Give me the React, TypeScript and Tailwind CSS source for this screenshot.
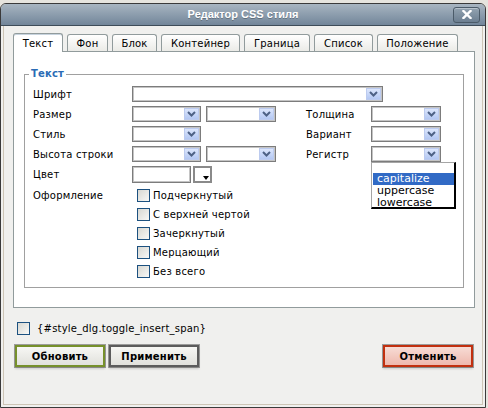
import React from 'react';

const Arrow = () => (
  <div className="w-[15px] h-full flex items-center justify-center bg-linear-to-b from-[#dce6fc] to-[#b4c8f3] border border-[#bccbef]">
    <svg width="9" height="6" viewBox="0 0 9 6">
      <path d="M1 1l3.5 3.5L8 1" fill="none" stroke="#4d6185" strokeWidth="2" />
    </svg>
  </div>
);

const Select = ({ w, children }: { w: string; children?: React.ReactNode }) => (
  <div className={`${w} relative h-[16px] flex justify-end border border-[#7c7c7c] bg-white p-px shadow-[inset_0_0_0_1px_#c4c4c4]`}>
    <Arrow />
    {children}
  </div>
);

const Check = () => (
  <div className="w-[13px] h-[13px] shrink-0 border border-[#1c5180] bg-linear-to-br from-[#d8d8d2] to-[#f8f8f6]" />
);

const Tab = ({ label, w, active }: { label: string; w: string; active?: boolean }) => (
  <div
    className={
      active
        ? `${w} h-[19px] -mb-px relative z-10 flex items-center justify-center bg-white border border-b-0 border-[#919b9c] rounded-t-[3px] shadow-[inset_0_1px_0_#c7d3de]`
        : `${w} h-[17px] flex items-center justify-center bg-linear-to-b from-[#ffffff] to-[#ebebe7] border border-b-0 border-[#919b9c] rounded-t-[3px]`
    }
  >
    {label}
  </div>
);

const Btn = ({ label, tone }: { label: string; tone: 'green' | 'grey' | 'red' }) => {
  const cls =
    tone === 'green'
      ? 'border-[#76902b] from-[#f7f7f4] to-[#e1e1dc]'
      : tone === 'red'
        ? 'border-[#c1300f] from-[#f7dcd5] to-[#eeb8ad]'
        : 'border-[#5c5c5c] from-[#f7f7f4] to-[#e1e1dc]';
  return (
    <div
      className={`w-[90px] h-[22px] flex items-center justify-center border-2 ${cls} bg-linear-to-b shadow-[0_0_0_1px_rgba(0,0,0,0.35),0_2px_2px_rgba(0,0,0,0.15)] font-bold text-[10px] text-black`}
    >
      {label}
    </div>
  );
};

const decor = ['Подчеркнутый', 'С верхней чертой', 'Зачеркнутый', 'Мерцающий', 'Без всего'];

export default function App() {
  return (
    <div className="w-[488px] h-[408px] bg-[#e6e4de] pt-[3px] font-['DejaVu_Sans',Verdana,sans-serif] text-[10px] tracking-[0.2px] text-black">
      <div className="w-[486px] h-[405px] flex flex-col rounded-t-[6px] border border-[#3a3a3a] overflow-hidden">
        {/* title bar */}
        <div className="h-[22px] shrink-0 flex items-center bg-linear-to-b from-[#a8b5c1] to-[#72869a] border-b border-[#3e4c59]">
          <div className="w-[32px]" />
          <div className="flex-1 text-center text-white font-bold text-[11px] tracking-normal font-['Liberation_Sans',Arial,sans-serif] [text-shadow:0_1px_0_rgba(0,0,0,0.25)]">
            Редактор CSS стиля
          </div>
          <div className="w-[27px] h-[16px] mr-[5px] flex items-center justify-center rounded-[3px] border border-[#4b5b69] bg-linear-to-b from-[#93a3b1] to-[#6c7f91] shadow-[inset_0_1px_0_rgba(255,255,255,0.35)]">
            <svg width="10" height="9" viewBox="0 0 10 9">
              <path d="M1.5 1l7 7M8.5 1l-7 7" stroke="#fff" strokeWidth="2.4" strokeLinecap="square" />
            </svg>
          </div>
        </div>

        {/* body */}
        <div className="flex-1 bg-[#f0f0ee] px-[2px] pb-[2px] flex flex-col">
          <div className="flex-1 border-x border-b border-[#cdc5b6] flex flex-col pl-[9px] pr-[7px] pt-[7px]">
            {/* tabs */}
            <div className="flex items-end gap-[4px] h-[18px]">
              <Tab label="Текст" w="w-[50px]" active />
              <Tab label="Фон" w="w-[41px]" />
              <Tab label="Блок" w="w-[45px]" />
              <Tab label="Контейнер" w="w-[79px]" />
              <Tab label="Граница" w="w-[66px]" />
              <Tab label="Список" w="w-[59px]" />
              <Tab label="Положение" w="w-[81px]" />
            </div>

            {/* panel */}
            <div className="h-[257px] border border-[#919b9c] bg-white px-[10px] pt-[15px]">
              <fieldset className="border border-[#a0a0a0] pb-[6px]">
                <legend className="ml-[4px] px-[2px] h-[14px] leading-[14px] font-bold text-[10px] text-[#2b6cb5]">
                  Текст
                </legend>
                <div className="pl-[8px] pt-[3px] flex flex-col">
                  <div className="flex items-center h-[20px]">
                    <span className="w-[99px]">Шрифт</span>
                    <Select w="w-[251px]" />
                  </div>
                  <div className="flex items-center h-[20px]">
                    <span className="w-[99px]">Размер</span>
                    <Select w="w-[69px]" />
                    <div className="w-[5px]" />
                    <Select w="w-[70px]" />
                    <span className="w-[65px] ml-[30px]">Толщина</span>
                    <Select w="w-[70px]" />
                  </div>
                  <div className="flex items-center h-[20px]">
                    <span className="w-[99px]">Стиль</span>
                    <Select w="w-[69px]" />
                    <span className="w-[65px] ml-[105px]">Вариант</span>
                    <Select w="w-[70px]" />
                  </div>
                  <div className="flex items-center h-[20px]">
                    <span className="w-[99px]">Высота строки</span>
                    <Select w="w-[69px]" />
                    <div className="w-[5px]" />
                    <Select w="w-[70px]" />
                    <span className="w-[65px] ml-[30px]">Регистр</span>
                    <Select w="w-[70px]">
                      <div className="absolute left-[-1px] top-[15px] z-20 w-[85px] h-[47px] bg-white border-t border-l border-[#a5a5a5] border-r-2 border-b-2 border-r-black border-b-black flex flex-col text-[11px] tracking-normal leading-[12px] pt-[10px]">
                        <div className="ml-px bg-[#316ac5] text-white pl-[4px]">capitalize</div>
                        <div className="pl-[5px]">uppercase</div>
                        <div className="pl-[5px]">lowercase</div>
                      </div>
                    </Select>
                  </div>
                  <div className="flex items-center h-[20px]">
                    <span className="w-[99px]">Цвет</span>
                    <div className="w-[59px] h-[17px] border border-[#7c7c7c] bg-white shadow-[inset_0_0_0_1px_#c4c4c4]" />
                    <div className="ml-[2px] w-[19px] h-[17px] flex items-end justify-end border-2 border-[#8a8a8a] bg-white pr-[1px] pb-[1px]">
                      <svg width="6" height="4" viewBox="0 0 6 4">
                        <path d="M0 0h6L3 4z" fill="#000" />
                      </svg>
                    </div>
                  </div>
                  <div className="flex mt-[2px]">
                    <div className="w-[99px] h-[19px] flex items-center">Оформление</div>
                    <div className="flex flex-col pl-[5px]">
                      {decor.map((d) => (
                        <div key={d} className="h-[19px] flex items-center gap-[3px]">
                          <Check />
                          <span>{d}</span>
                        </div>
                      ))}
                    </div>
                  </div>
                </div>
              </fieldset>
            </div>

            {/* insert span */}
            <div className="flex items-center gap-[7px] ml-[4px] mt-[14px] h-[13px]">
              <Check />
              <span>{'{#style_dlg.toggle_insert_span}'}</span>
            </div>

            {/* buttons */}
            <div className="flex justify-between mx-[2px] mt-[10px]">
              <div className="flex gap-[4px]">
                <Btn label="Обновить" tone="green" />
                <Btn label="Применить" tone="grey" />
              </div>
              <Btn label="Отменить" tone="red" />
            </div>
          </div>
        </div>
      </div>
    </div>
  );
}
